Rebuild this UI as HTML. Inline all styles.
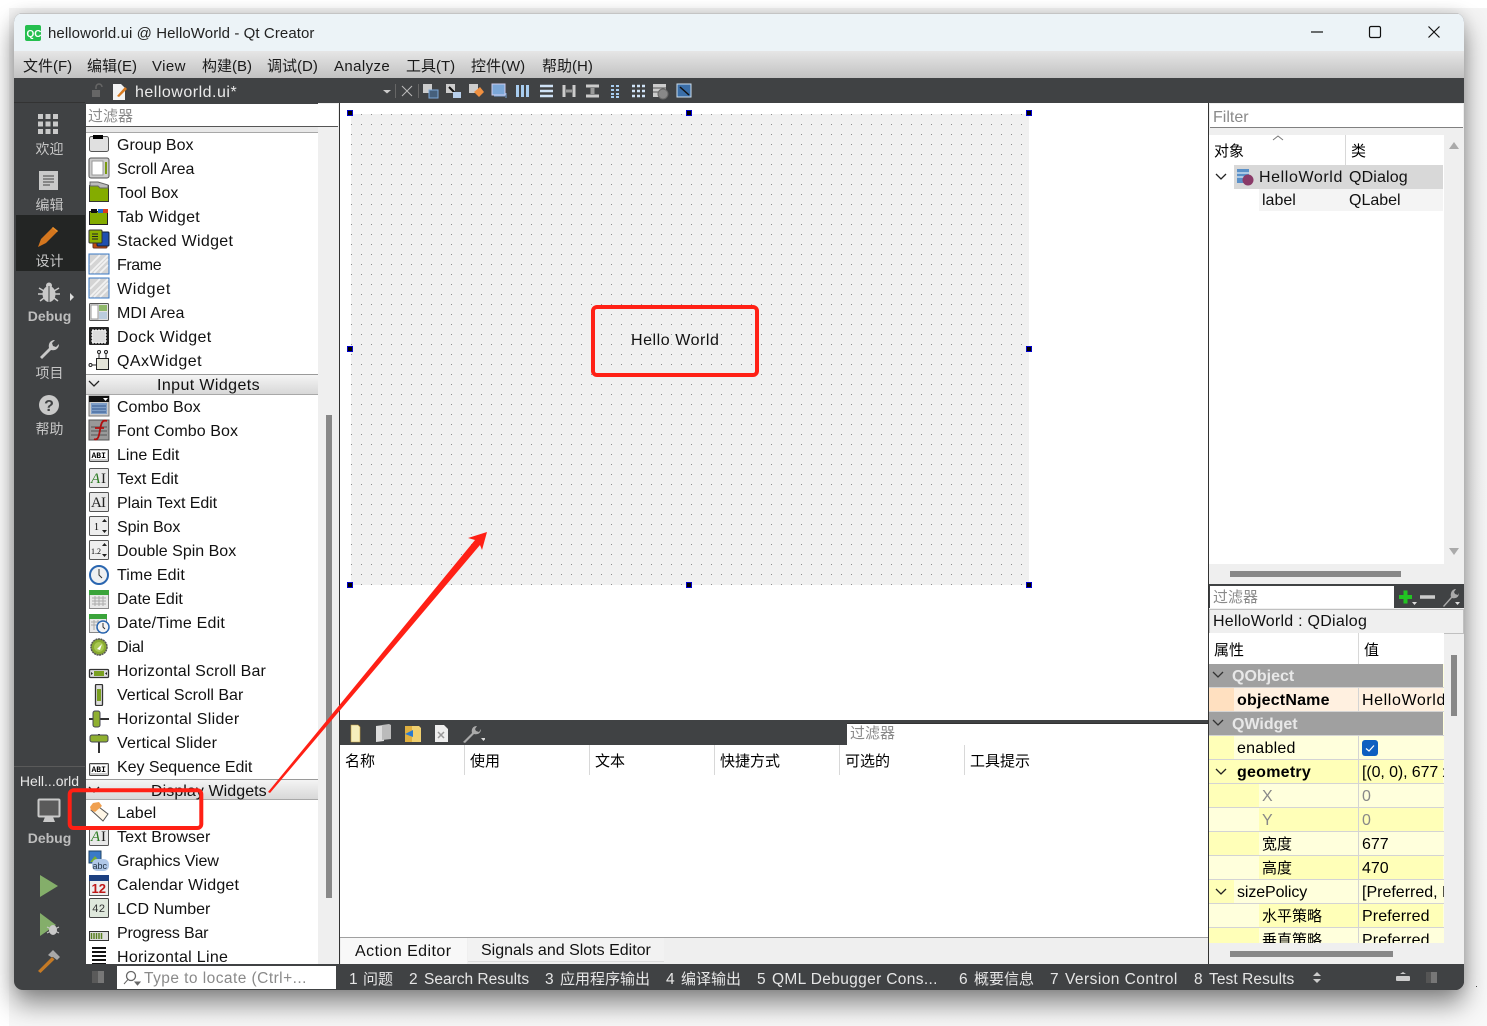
<!DOCTYPE html>
<html><head><meta charset="utf-8"><title>helloworld.ui @ HelloWorld - Qt Creator</title>
<style>
html,body{margin:0;padding:0;width:1487px;height:1026px;overflow:hidden;background:#fff}
body{position:relative;font-family:"Liberation Sans","Noto Sans CJK SC",sans-serif;font-size:16px;color:#000}
div,svg,span{position:absolute}
.t{white-space:nowrap;line-height:20px;height:20px;margin-top:2px}
.l{color:#111}
.s{color:#c6c6c6;font-size:14px;width:71px;left:14px;text-align:center;line-height:18px;height:18px;white-space:nowrap}
.sb{font-weight:bold;color:#bdbdbd}
.m{font-size:15px;color:#1a1a1a;top:57px;white-space:nowrap;line-height:20px}
.b{color:#e6e6e6;font-size:15.5px;top:970px;white-space:nowrap;line-height:20px}
.bc{font-size:15px}
.hd{left:86px;width:232px;background:linear-gradient(#f4f4f4,#d8d8d8);border-top:1px solid #9a9a9a;border-bottom:1px solid #a8a8a8;height:19px}
.i{left:88px;width:22px;height:22px}
.r{left:1209px;width:234px;height:23px}
.p{white-space:nowrap;line-height:20px;height:20px;margin-top:2px}
.sep{background:#d8d8d8;width:1px}
.h{width:4px;height:4px;background:#000;border:1px solid #00c}
</style></head><body>
<svg width="0" height="0" style="left:0;top:0"><defs>
<symbol id="g" viewBox="0 0 22 22"><rect x="1.500" y="3.500" width="19" height="15" rx="2" fill="#e0e0e0" stroke="#555"/><rect x="5" y="2" width="10" height="4" fill="#000"/></symbol>
<symbol id="sa" viewBox="0 0 22 22"><rect x="1" y="1" width="20" height="20" rx="2" fill="#ccc" stroke="#555"/><rect x="4" y="4" width="11" height="14" fill="#fff" stroke="#999"/><rect x="17" y="5" width="2" height="12" fill="#7a9a10"/></symbol>
<symbol id="tb" viewBox="0 0 22 22"><path d="M1.500 4.500h19v16h-19z" fill="#84ac00" stroke="#333"/><path d="M2 1h8l10 3v3h-8l-2-2H2z" fill="#bbb" stroke="#666"/></symbol>
<symbol id="tw" viewBox="0 0 22 22"><rect x="1.500" y="6.500" width="18" height="13" fill="#84ac00" stroke="#222"/><rect x="3" y="4" width="6" height="4" fill="#111"/><rect x="10" y="4" width="5" height="4" fill="#1f6ed4"/><rect x="15" y="4" width="5" height="4" fill="#d83b1c"/></symbol>
<symbol id="st" viewBox="0 0 22 22"><rect x="5" y="6" width="14" height="13" rx="1" fill="#c04a10" stroke="#632"/><rect x="9" y="3" width="12" height="14" rx="1" fill="#1f4fb0" stroke="#123"/><rect x="1" y="1" width="13" height="13" rx="1" fill="#8cb000" stroke="#333"/><path d="M4 5h6M4 7.500h6M4 10h6" stroke="#222"/></symbol>
<symbol id="fr" viewBox="0 0 22 22"><rect x="1" y="1" width="20" height="20" fill="#d4d4d4" stroke="#3a78c4"/><path d="M2 12 12 2M6 20 20 6M2 20 20 2M12 20 20 12" stroke="#f2f2f2" stroke-width="1.800"/></symbol>
<symbol id="mdi" viewBox="0 0 22 22"><rect x="1.500" y="2.500" width="19" height="17" rx="1" fill="#e0e0e0" stroke="#555"/><rect x="3" y="4" width="7" height="14" fill="#fff" stroke="#999"/><rect x="11" y="4" width="8" height="6" fill="#8fb86a"/><rect x="11" y="11" width="8" height="7" fill="#bcd"/></symbol>
<symbol id="dk" viewBox="0 0 22 22"><rect x="1" y="2" width="20" height="18" rx="1" fill="#222"/><rect x="4" y="5" width="14" height="13" fill="#ddd" stroke="#fff" stroke-dasharray="2 1"/></symbol>
<symbol id="qx" viewBox="0 0 22 22"><rect x="8.500" y="9.500" width="12" height="11" fill="#e4e4d8" stroke="#222"/><path d="M11 9V3M18 9V3M8 16H3" stroke="#222"/><circle cx="11" cy="3" r="1.500" fill="#fff" stroke="#222"/><circle cx="18" cy="3" r="1.500" fill="#fff" stroke="#222"/><circle cx="2.500" cy="16" r="1.500" fill="#fff" stroke="#222"/></symbol>
<symbol id="cb" viewBox="0 0 22 22"><rect x="1" y="1" width="20" height="20" fill="#ccc" stroke="#777"/><rect x="1" y="1" width="20" height="6" fill="#111"/><path d="M15 3h5l-2.500 3z" fill="#fff"/><rect x="3" y="8" width="16" height="11" fill="#7f9fc8"/><path d="M4 11h14M4 14h14M4 17h14" stroke="#345a90"/></symbol>
<symbol id="fc" viewBox="0 0 22 22"><rect x="1" y="1" width="20" height="20" fill="#999" stroke="#555"/><path d="M3 8h16M3 12h16M3 16h16" stroke="#777" stroke-width="2"/><path d="M6 20c4 2 5-3 6-9s2-11 7-9M7 9h9" fill="none" stroke="#b01010" stroke-width="1.800"/></symbol>
<symbol id="le" viewBox="0 0 22 22"><rect x="1.500" y="6.500" width="19" height="12" rx="1" fill="#ccc" stroke="#444"/><rect x="3" y="8" width="16" height="8" fill="#fff"/><text x="3.500" y="15" font-size="8" font-weight="bold" font-family="Liberation Mono">ABI</text></symbol>
<symbol id="te" viewBox="0 0 22 22"><rect x="1.500" y="1.500" width="19" height="19" rx="1" fill="#e8e8e8" stroke="#555"/><text x="3" y="16" font-size="15" font-style="italic" font-family="Liberation Serif" fill="#2a7a20">A</text><text x="13" y="16" font-size="15" font-family="Liberation Serif" fill="#222">I</text></symbol>
<symbol id="pe" viewBox="0 0 22 22"><rect x="1.500" y="1.500" width="19" height="19" rx="1" fill="#e8e8e8" stroke="#555"/><text x="3" y="16" font-size="15" font-family="Liberation Serif" fill="#222">A</text><text x="13" y="16" font-size="15" font-family="Liberation Serif" fill="#222">I</text></symbol>
<symbol id="sp" viewBox="0 0 22 22"><rect x="1.500" y="1.500" width="19" height="19" rx="1" fill="#eee" stroke="#555"/><text x="6" y="15" font-size="10" font-family="Liberation Serif">1</text><path d="M14 7l2.500-3L19 7zM14 15l2.500 3 2.500-3z" fill="#222"/></symbol>
<symbol id="ds" viewBox="0 0 22 22"><rect x="1.500" y="1.500" width="19" height="19" rx="1" fill="#eee" stroke="#555"/><text x="3" y="15" font-size="8" font-family="Liberation Serif">1.2</text><path d="M14 7l2.500-3L19 7zM14 15l2.500 3 2.500-3z" fill="#222"/></symbol>
<symbol id="ck" viewBox="0 0 22 22"><circle cx="11" cy="11" r="9" fill="#eef0f2" stroke="#2a66b0" stroke-width="2"/><path d="M11 5v6l3 3" fill="none" stroke="#333"/></symbol>
<symbol id="de" viewBox="0 0 22 22"><rect x="1.500" y="3.500" width="19" height="17" fill="#e8e8e8" stroke="#888"/><rect x="1" y="2" width="20" height="5" fill="#3aa43a"/><path d="M4 10h14M4 13h14M4 16h14M7 8v10M11 8v10M15 8v10" stroke="#aaa"/></symbol>
<symbol id="dt" viewBox="0 0 22 22"><rect x="1.500" y="3.500" width="17" height="17" fill="#e8e8e8" stroke="#888"/><rect x="1" y="2" width="18" height="5" fill="#3aa43a"/><path d="M3 10h10M3 13h8M6 8v10M10 8v6" stroke="#aaa"/><circle cx="15" cy="15" r="6" fill="#f4f4f4" stroke="#2a66b0" stroke-width="1.500"/><path d="M15 11v4l2 2" fill="none" stroke="#333"/></symbol>
<symbol id="dl" viewBox="0 0 22 22"><circle cx="11" cy="11" r="8" fill="#88aa30" stroke="#555" stroke-width="1.500" stroke-dasharray="2 .6"/><circle cx="11" cy="11" r="5" fill="#a8c850"/><path d="M9 13l5-5-2 6z" fill="#fff"/></symbol>
<symbol id="hs" viewBox="0 0 22 22"><rect x="1.500" y="7.500" width="19" height="8" rx="1" fill="#ddd" stroke="#333" stroke-width="1.300"/><rect x="6" y="9" width="10" height="5" fill="#7aa020"/><path d="M5 11.500l-2-1.500v3zM17 11.500l2-1.500v3z" fill="#222"/></symbol>
<symbol id="vs" viewBox="0 0 22 22"><rect x="7.500" y="0.500" width="7" height="21" rx="1" fill="#ddd" stroke="#333" stroke-width="1.300"/><rect x="9" y="5" width="4" height="12" fill="#7aa020"/></symbol>
<symbol id="hl" viewBox="0 0 22 22"><path d="M1 11h20" stroke="#333" stroke-width="2"/><rect x="5" y="3" width="7" height="16" rx="2" fill="#8fb030" stroke="#445"/></symbol>
<symbol id="vl" viewBox="0 0 22 22"><path d="M11 2v19" stroke="#333" stroke-width="2"/><rect x="2" y="3" width="18" height="7" rx="2" fill="#8fb030" stroke="#445"/></symbol>
<symbol id="lb" viewBox="0 0 22 22"><path d="M7 3 20 13l-5 7L3 9z" fill="#fff6e6" stroke="#555"/><path d="M2 6l3-4 6-1 3 4-7 6-4-2z" fill="#f0a050"/></symbol>
<symbol id="gv" viewBox="0 0 22 22"><rect x="1" y="1" width="12" height="12" fill="#3a7ac8" stroke="#246"/><path d="M2 12l5-6 5 6z" fill="#7ab030"/><rect x="4" y="9" width="17" height="12" rx="5" fill="#b0c8e8"/><text x="4.500" y="19" font-size="9" fill="#234">abc</text></symbol>
<symbol id="cl" viewBox="0 0 22 22"><rect x="1.500" y="1.500" width="19" height="20" fill="#eee" stroke="#555"/><rect x="1" y="1" width="20" height="6" fill="#1c3f80"/><text x="3.500" y="19" font-size="13" font-weight="bold" fill="#c01818">12</text></symbol>
<symbol id="lc" viewBox="0 0 22 22"><rect x="1.500" y="1.500" width="19" height="19" rx="1" fill="#dfe8dc" stroke="#444"/><text x="4" y="15" font-size="11" font-family="Liberation Mono" fill="#333">42</text></symbol>
<symbol id="pb" viewBox="0 0 22 22"><rect x="1.500" y="7.500" width="19" height="9" fill="#ddd" stroke="#333"/><path d="M3.500 9v6M6 9v6M8.500 9v6M11 9v6M13.500 9v6" stroke="#5a8020" stroke-width="1.500"/></symbol>
<symbol id="hn" viewBox="0 0 22 22"><path d="M4 2h14M4 6h14M4 10h14M4 14h14M4 18h14" stroke="#111" stroke-width="2"/></symbol>
</defs></svg>

<div style="left:9px;top:8px;width:1478px;height:1018px;background:linear-gradient(#f4f4f4,#f8f8f8)"></div>
<div id="win" style="left:14px;top:13px;width:1450px;height:977px;border-radius:9px;background:#404244;box-shadow:0 14px 26px rgba(0,0,0,.45),0 0 14px rgba(0,0,0,.12);overflow:hidden">
<div style="left:0;top:0;width:1450px;height:38px;background:#ecf3f7;border-top:1px solid #c4c4c4;box-sizing:border-box"></div>
<div style="left:0;top:38px;width:1450px;height:27px;background:linear-gradient(#e6e6e6,#c2c2c2)"></div>
</div>

<!-- title -->
<svg style="left:25px;top:25px" width="16" height="16"><rect width="16" height="16" rx="2" fill="#25bf4f"/><text x="1.500" y="12" font-size="10" font-weight="bold" fill="#fff" font-family="Liberation Sans">QC</text></svg>
<div class="t" style="left:48px;top:22px;font-size:15px;color:#222;letter-spacing:.08px">helloworld.ui @ HelloWorld - Qt Creator</div>
<svg style="left:1305px;top:22px" width="145" height="20" fill="none" stroke="#111" stroke-width="1.200"><path d="M6 10h12"/><rect x="64.500" y="4.500" width="11" height="11" rx="1.500"/><path d="M123.500 4.500l11 11M134.500 4.500l-11 11"/></svg>
<div class="m" style="left:23px">文件(F)</div><div class="m" style="left:87px">编辑(E)</div><div class="m" style="left:152px;letter-spacing:.4px">View</div><div class="m" style="left:202px">构建(B)</div><div class="m" style="left:267px">调试(D)</div><div class="m" style="left:334px;letter-spacing:.4px">Analyze</div><div class="m" style="left:406px">工具(T)</div><div class="m" style="left:471px">控件(W)</div><div class="m" style="left:542px">帮助(H)</div>

<!-- editor toolbar -->
<div style="left:14px;top:102px;width:71px;height:1px;background:#333"></div>
<svg style="left:90px;top:83px" width="40" height="18"><path d="M6 6V4a3 3 0 0 1 6 0" fill="none" stroke="#666" stroke-width="1.500"/><rect x="2" y="7" width="8" height="7" fill="#666"/><path d="M23 1h8l4 4v12H23z" fill="#f3f3f3"/><path d="M27 13l8-9 2 2-8 8z" fill="#d87a20"/></svg>
<div class="t" style="left:135px;top:81px;color:#eaeaea;font-size:16px;letter-spacing:.5px">helloworld.ui*</div>
<svg style="left:380px;top:82px" width="320" height="18">
<path d="M3 8h8l-4 3.500z" fill="#ccc"/><path d="M15.500 2v14M38.500 2v14" stroke="#666"/><path d="M22 4l10 10M32 4 22 14" stroke="#bbb"/>
<g><rect x="43" y="2" width="9" height="9" fill="#ccc"/><rect x="49" y="8" width="9" height="8" fill="#46607c" stroke="#7ba7d8"/></g>
<g><rect x="66" y="2" width="9" height="9" fill="#ccc"/><path d="M69 5l6 6" stroke="#111" stroke-width="2"/><rect x="73" y="10" width="8" height="6" fill="#b8d0ec"/></g>
<g><rect x="89" y="2" width="9" height="9" fill="#ccc"/><path d="M100 5l4 5-5 5-5-5z" fill="#f09040"/></g>
<g><rect x="112" y="2" width="13" height="11" fill="#7ba7d8" stroke="#cce"/><path d="M114 14h11M126 11v5" stroke="#7ba7d8"/></g>
<path d="M137.500 3v12M142.500 3v12M147.500 3v12" stroke="#a8cdf0" stroke-width="3"/>
<path d="M160 4h13M160 9h13M160 14h13" stroke="#cfe2f6" stroke-width="2.500"/>
<path d="M184 3v12M194 3v12" stroke="#ccc" stroke-width="3"/><path d="M186 9h6" stroke="#999" stroke-width="3"/>
<path d="M206 4h13M206 14h13" stroke="#ccc" stroke-width="3"/><path d="M212.500 6v6" stroke="#999" stroke-width="4"/>
<path d="M231 4h3M236 4h3M231 8h3M236 8h3M231 12h3M236 12h3M231 15h3M236 15h3" stroke="#a8cdf0" stroke-width="2"/>
<path d="M252 4h3M257 4h3M262 4h3M252 9h3M257 9h3M262 9h3M252 14h3M257 14h3M262 14h3" stroke="#cfe2f6" stroke-width="2.500"/>
<rect x="273" y="2" width="13" height="13" fill="#ccc"/><path d="M273 6h13M273 10h13" stroke="#555"/><circle cx="283" cy="12" r="5" fill="#888" stroke="#666"/>
<rect x="297" y="2" width="14" height="13" fill="#3a6ea8" stroke="#cde"/><path d="M300 5l9 8" stroke="#111" stroke-width="1.500"/>
</svg>

<!-- status bar (under sidebar) -->
<div style="left:85px;top:964px;width:1379px;height:26px;background:#404244;border-radius:0 0 9px 0"></div>

<!-- sidebar -->
<div style="left:16px;top:215px;width:69px;height:56px;background:#232524"></div>
<svg style="left:38px;top:114px" width="21" height="20" fill="#c9c9c9"><rect width="5" height="5"/><rect x="7.500" width="5" height="5"/><rect x="15" width="5" height="5"/><rect y="7.500" width="5" height="5"/><rect x="7.500" y="7.500" width="5" height="5"/><rect x="15" y="7.500" width="5" height="5"/><rect y="15" width="5" height="5"/><rect x="7.500" y="15" width="5" height="5"/><rect x="15" y="15" width="5" height="5"/></svg>
<div class="s" style="top:140px">欢迎</div>
<svg style="left:39px;top:171px" width="20" height="20"><rect width="19" height="19" fill="#c9c9c9"/><path d="M4 5h11M4 8h11M4 11h11M4 14h7" stroke="#444"/></svg>
<div class="s" style="top:196px">编辑</div>
<svg style="left:37px;top:226px" width="22" height="22"><path d="M1 21l3-8L16 1l5 4L9 17z" fill="#d4761e"/><path d="M15 2l5 4 1-1-5-4z" fill="#e8902c"/></svg>
<div class="s" style="top:252px">设计</div>
<svg style="left:38px;top:282px" width="22" height="22" fill="#c9c9c9"><ellipse cx="11" cy="12" rx="6.500" ry="8"/><circle cx="11" cy="3.500" r="3"/><path d="M1 6l5 3M21 6l-5 3M0 12h5M22 12h-5M2 19l4-3M20 19l-4-3" stroke="#c9c9c9" stroke-width="1.500"/><path d="M11 4v16" stroke="#404244"/></svg>
<svg style="left:69px;top:293px" width="6" height="8"><path d="M1 0l4 4-4 4z" fill="#ddd"/></svg>
<div class="s sb" style="top:307px">Debug</div>
<svg style="left:38px;top:338px" width="22" height="22"><path d="M2 19 11 10c-1-4 1-8 6-8l-3 3 1 3 3 1 3-3c0 5-4 7-8 6l-9 9z" fill="#c9c9c9"/></svg>
<div class="s" style="top:364px">项目</div>
<svg style="left:38px;top:394px" width="22" height="22"><circle cx="11" cy="11" r="10" fill="#c9c9c9"/><text x="11" y="17" text-anchor="middle" font-size="16" font-weight="bold" fill="#404244" font-family="Liberation Sans">?</text></svg>
<div class="s" style="top:420px">帮助</div>
<div style="left:14px;top:766px;width:71px;height:1px;background:#5a5a5a"></div>
<div class="s" style="top:772px;color:#e8e8e8">Hell...orld</div>
<svg style="left:37px;top:798px" width="26" height="26"><rect x="1.500" y="1.500" width="21" height="17" rx="1" fill="#5a5a5a" stroke="#c9c9c9" stroke-width="2"/><path d="M8 19h8l2 5H6z" fill="#c9c9c9"/></svg>
<div class="s sb" style="top:829px">Debug</div>
<svg style="left:40px;top:875px" width="19" height="23"><path d="M0 0l18 11L0 22z" fill="#84ae6a"/></svg>
<svg style="left:40px;top:913px" width="20" height="24"><path d="M0 0l16 12L0 23z" fill="#84ae6a"/><ellipse cx="13" cy="17" rx="4" ry="5" fill="#c9c9c9"/><path d="M7 14l12 6M19 14 7 20" stroke="#c9c9c9"/></svg>
<svg style="left:37px;top:949px" width="24" height="24"><path d="M1 22 15 8l2.500 2.500L3.500 24z" fill="#c57a25"/><path d="M11 6l5-5 7 7-3 3-4-3-2 0z" fill="#a8a8a8"/></svg>

<!-- widget box -->
<div style="left:86px;top:127px;width:232px;height:837px;background:#fff"></div>
<div style="left:318px;top:103px;width:21px;height:861px;background:#efefef"></div>
<div style="left:86px;top:127px;width:232px;height:5px;overflow:hidden;background:#e8e8e8"><div style="left:85px;top:-14px;white-space:nowrap;line-height:20px;color:#111">Containers</div></div>
<div style="left:86px;top:104px;width:252px;height:22px;background:#fff;border-bottom:1px solid #555"></div>
<div class="t" style="left:88px;top:105px;font-size:15px;color:#8a8a8a">过滤器</div>
<div style="left:86px;top:132px;width:232px;height:1px;background:#a8a8a8"></div>
<div style="left:326px;top:415px;width:6px;height:483px;background:#888"></div>
<div style="left:339px;top:103px;width:1px;height:861px;background:#333"></div>

<svg class="i" style="top:133px"><use href="#g"/></svg><div class="t l" style="left:117px;top:134px">Group Box</div>
<svg class="i" style="top:157px"><use href="#sa"/></svg><div class="t l" style="left:117px;top:158px">Scroll Area</div>
<svg class="i" style="top:181px"><use href="#tb"/></svg><div class="t l" style="left:117px;top:182px">Tool Box</div>
<svg class="i" style="top:205px"><use href="#tw"/></svg><div class="t l" style="left:117px;top:206px;letter-spacing:.3px">Tab Widget</div>
<svg class="i" style="top:229px"><use href="#st"/></svg><div class="t l" style="left:117px;top:230px;letter-spacing:.3px">Stacked Widget</div>
<svg class="i" style="top:253px"><use href="#fr"/></svg><div class="t l" style="left:117px;top:254px;letter-spacing:-.4px">Frame</div>
<svg class="i" style="top:277px"><use href="#fr"/></svg><div class="t l" style="left:117px;top:278px;letter-spacing:.7px">Widget</div>
<svg class="i" style="top:301px"><use href="#mdi"/></svg><div class="t l" style="left:117px;top:302px;letter-spacing:.1px">MDI Area</div>
<svg class="i" style="top:325px"><use href="#dk"/></svg><div class="t l" style="left:117px;top:326px;letter-spacing:.35px">Dock Widget</div>
<svg class="i" style="top:349px"><use href="#qx"/></svg><div class="t l" style="left:117px;top:350px;letter-spacing:.45px">QAxWidget</div>
<div class="hd" style="top:374px"></div>
<svg style="left:88px;top:380px" width="12" height="8"><path d="M1 1l5 5 5-5" fill="none" stroke="#222" stroke-width="1.300"/></svg>
<div class="t l" style="left:157px;top:374px;letter-spacing:.4px">Input Widgets</div>
<svg class="i" style="top:395px"><use href="#cb"/></svg><div class="t l" style="left:117px;top:396px">Combo Box</div>
<svg class="i" style="top:419px"><use href="#fc"/></svg><div class="t l" style="left:117px;top:420px;letter-spacing:.07px">Font Combo Box</div>
<svg class="i" style="top:443px"><use href="#le"/></svg><div class="t l" style="left:117px;top:444px">Line Edit</div>
<svg class="i" style="top:467px"><use href="#te"/></svg><div class="t l" style="left:117px;top:468px">Text Edit</div>
<svg class="i" style="top:491px"><use href="#pe"/></svg><div class="t l" style="left:117px;top:492px;letter-spacing:-.07px">Plain Text Edit</div>
<svg class="i" style="top:515px"><use href="#sp"/></svg><div class="t l" style="left:117px;top:516px;letter-spacing:-.1px">Spin Box</div>
<svg class="i" style="top:539px"><use href="#ds"/></svg><div class="t l" style="left:117px;top:540px">Double Spin Box</div>
<svg class="i" style="top:564px"><use href="#ck"/></svg><div class="t l" style="left:117px;top:564px;letter-spacing:.1px">Time Edit</div>
<svg class="i" style="top:588px"><use href="#de"/></svg><div class="t l" style="left:117px;top:588px">Date Edit</div>
<svg class="i" style="top:612px"><use href="#dt"/></svg><div class="t l" style="left:117px;top:612px;letter-spacing:.2px">Date/Time Edit</div>
<svg class="i" style="top:636px"><use href="#dl"/></svg><div class="t l" style="left:117px;top:636px;letter-spacing:-.2px">Dial</div>
<svg class="i" style="top:662px"><use href="#hs"/></svg><div class="t l" style="left:117px;top:660px;letter-spacing:.15px">Horizontal Scroll Bar</div>
<svg class="i" style="top:684px"><use href="#vs"/></svg><div class="t l" style="left:117px;top:684px">Vertical Scroll Bar</div>
<svg class="i" style="top:708px"><use href="#hl"/></svg><div class="t l" style="left:117px;top:708px;letter-spacing:.3px">Horizontal Slider</div>
<svg class="i" style="top:732px"><use href="#vl"/></svg><div class="t l" style="left:117px;top:732px;letter-spacing:.15px">Vertical Slider</div>
<svg class="i" style="top:757px"><use href="#le"/></svg><div class="t l" style="left:117px;top:756px;letter-spacing:-.05px">Key Sequence Edit</div>
<div class="hd" style="top:779px"></div>
<svg style="left:88px;top:786px" width="12" height="8"><path d="M1 1l5 5 5-5" fill="none" stroke="#222" stroke-width="1.300"/></svg>
<div class="t l" style="left:151px;top:780px;letter-spacing:.07px">Display Widgets</div>
<svg class="i" style="top:801px"><use href="#lb"/></svg><div class="t l" style="left:117px;top:802px">Label</div>
<svg class="i" style="top:825px"><use href="#te"/></svg><div class="t l" style="left:117px;top:826px;letter-spacing:.08px">Text Browser</div>
<svg class="i" style="top:850px"><use href="#gv"/></svg><div class="t l" style="left:117px;top:850px;letter-spacing:-.08px">Graphics View</div>
<svg class="i" style="top:874px"><use href="#cl"/></svg><div class="t l" style="left:117px;top:874px;letter-spacing:.2px">Calendar Widget</div>
<svg class="i" style="top:897px"><use href="#lc"/></svg><div class="t l" style="left:117px;top:898px">LCD Number</div>
<svg class="i" style="top:924px"><use href="#pb"/></svg><div class="t l" style="left:117px;top:922px;letter-spacing:-.17px">Progress Bar</div>
<div style="left:86px;top:944px;width:252px;height:20px;overflow:hidden"><svg style="left:2px;top:2px" width="22" height="22"><use href="#hn"/></svg><div class="t l" style="left:31px;top:2px;letter-spacing:.3px">Horizontal Line</div></div>

<!-- form editor -->
<div style="left:340px;top:103px;width:868px;height:617px;background:#fff"></div>
<svg style="left:351px;top:104px" width="678" height="481"><defs><pattern id="dots" x="0" y="0" width="10" height="10" patternUnits="userSpaceOnUse"><rect x="0" y="0" width="1" height="1" fill="#8d8d8d"/></pattern></defs><rect y="10" width="678" height="471" fill="#f0f0f0"/><rect y="10" width="678" height="471" fill="url(#dots)"/></svg>
<div class="t" style="left:631px;top:329px;color:#111;letter-spacing:.55px">Hello World</div>
<div class="h" style="left:347px;top:110px"></div>
<div class="h" style="left:686px;top:110px"></div>
<div class="h" style="left:1026px;top:110px"></div>
<div class="h" style="left:347px;top:346px"></div>
<div class="h" style="left:1026px;top:346px"></div>
<div class="h" style="left:347px;top:582px"></div>
<div class="h" style="left:686px;top:582px"></div>
<div class="h" style="left:1026px;top:582px"></div>

<!-- action editor -->
<div style="left:340px;top:745px;width:868px;height:192px;background:#fff"></div>
<div style="left:340px;top:720px;width:868px;height:25px;background:#404244"></div>
<svg style="left:345px;top:722px" width="140" height="22"><path d="M6 3h7l2 2v15H6z" fill="#f6eebc" stroke="#c8a040" stroke-width=".6"/><path d="M31 4l8-1v16l-8 1z" fill="#ddd"/><path d="M37 3l7-1 2 1v14l-9 1z" fill="#bbb"/><path d="M60 4h7v16h-7z" fill="#e0b040"/><path d="M67 4h7l2 2v14h-9z" fill="#f0d070"/><path d="M60 12l8-4v7z" fill="#2a7ad0"/><path d="M90 3h9l4 4v13H90z" fill="#eee"/><path d="M93 10l6 6M99 10l-6 6" stroke="#999" stroke-width="1.500"/><path d="M118 20l9-9c-1-4 1-7 5-7l-2 3 1 2 3 1 2-3c0 4-3 6-7 5l-9 9z" fill="#aaa"/><path d="M136 16h5l-2.500 3z" fill="#ddd"/></svg>
<div style="left:847px;top:723px;width:361px;height:22px;background:#fff;border-top:1px solid #333;box-sizing:border-box"></div>
<div class="t" style="left:850px;top:722px;font-size:15px;color:#8a8a8a">过滤器</div>
<div class="sep" style="left:464px;top:745px;height:30px"></div><div class="sep" style="left:589px;top:745px;height:30px"></div><div class="sep" style="left:714px;top:745px;height:30px"></div><div class="sep" style="left:839px;top:745px;height:30px"></div><div class="sep" style="left:964px;top:745px;height:30px"></div>
<div class="t" style="left:345px;top:750px;font-size:15px">名称</div><div class="t" style="left:470px;top:750px;font-size:15px">使用</div><div class="t" style="left:595px;top:750px;font-size:15px">文本</div><div class="t" style="left:720px;top:750px;font-size:15px">快捷方式</div><div class="t" style="left:845px;top:750px;font-size:15px">可选的</div><div class="t" style="left:970px;top:750px;font-size:15px">工具提示</div>
<div style="left:340px;top:937px;width:868px;height:27px;background:#efefef;border-top:1px solid #a0a0a0;box-sizing:border-box"></div>
<div style="left:341px;top:938px;width:126px;height:26px;background:#f8f8f8"></div>
<div style="left:468px;top:938px;width:196px;height:24px;background:#f2f2f2;border-bottom:1px solid #ddd;box-sizing:border-box"></div>
<div class="t" style="left:355px;top:940px;color:#111;letter-spacing:.45px">Action Editor</div>
<div class="t" style="left:481px;top:939px;color:#111">Signals and Slots Editor</div>

<!-- right panel -->
<div style="left:1208px;top:103px;width:1px;height:861px;background:#333"></div>
<div style="left:1209px;top:103px;width:255px;height:861px;background:#efefef"></div>
<div style="left:1210px;top:104px;width:253px;height:23px;background:#fff;border-bottom:1px solid #808080"></div>
<div class="t" style="left:1213px;top:106px;font-size:16px;color:#8a8a8a">Filter</div>
<div style="left:1209px;top:135px;width:235px;height:429px;background:#fff"></div>
<div class="sep" style="left:1345px;top:135px;height:30px"></div>
<svg style="left:1272px;top:134px" width="12" height="8"><path d="M1 6l5-4 5 4" fill="none" stroke="#777"/></svg>
<div class="t" style="left:1214px;top:140px;font-size:15px">对象</div><div class="t" style="left:1351px;top:140px;font-size:15px">类</div>
<div style="left:1234px;top:165px;width:209px;height:24px;background:#d8d8d8"></div>
<div style="left:1259px;top:189px;width:184px;height:22px;background:#f4f4f4"></div>
<svg style="left:1215px;top:173px" width="12" height="8"><path d="M1 1l5 5 5-5" fill="none" stroke="#222" stroke-width="1.300"/></svg>
<svg style="left:1236px;top:168px" width="18" height="18"><rect x="1" y="1" width="12" height="14" fill="#5a90c8"/><path d="M1 5h12M1 9h12" stroke="#fff"/><circle cx="12" cy="12" r="5.500" fill="#8a3a68"/></svg>
<div class="t l" style="left:1259px;top:166px;letter-spacing:.6px">HelloWorld</div><div class="t l" style="left:1349px;top:166px;letter-spacing:.15px">QDialog</div>
<div class="t l" style="left:1262px;top:189px">label</div><div class="t l" style="left:1349px;top:189px">QLabel</div>
<svg style="left:1449px;top:141px" width="10" height="8"><path d="M0 8l5-7 5 7z" fill="#aaa"/></svg>
<svg style="left:1449px;top:548px" width="10" height="8"><path d="M0 0l5 7 5-7z" fill="#aaa"/></svg>
<div style="left:1230px;top:571px;width:171px;height:6px;background:#888"></div>

<div style="left:1209px;top:584px;width:255px;height:24px;background:#404244"></div>
<div style="left:1210px;top:586px;width:184px;height:22px;background:#fff"></div>
<div class="t" style="left:1213px;top:586px;font-size:15px;color:#8a8a8a">过滤器</div>
<svg style="left:1396px;top:587px" width="66" height="20"><path d="M3 10h13M9.500 3.500v13" stroke="#22c522" stroke-width="4"/><path d="M16 15h5l-2.500 3zM59 15h5l-2.500 3z" fill="#ddd"/><path d="M24 10h15" stroke="#ccc" stroke-width="3.500"/><path d="M47 19l8-9c-1-4 1-8 5-8l-2 3 1 2 3 1 1-2c0 4-3 6-7 5l-8 9z" fill="#aaa"/></svg>
<div style="left:1209px;top:609px;width:253px;height:23px;background:#efefef;border:1px solid #c0c0c0"></div>
<div class="t l" style="left:1213px;top:610px;letter-spacing:.25px">HelloWorld : QDialog</div>
<div style="left:1209px;top:633px;width:235px;height:31px;background:#fff"></div>
<div class="sep" style="left:1358px;top:633px;height:31px"></div>
<div class="t" style="left:1214px;top:639px;font-size:15px">属性</div><div class="t" style="left:1364px;top:639px;font-size:15px">值</div>
<div style="left:1451px;top:655px;width:6px;height:61px;background:#888"></div>

<div style="left:1209px;top:664px;width:235px;height:279px;background:#ffffdc;overflow:hidden">
<div class="r" style="left:0;top:0;background:#a0a0a0"></div>
<div class="r" style="left:0;top:24px;background:#fff0e0"></div><div style="left:0;top:24px;width:25px;height:23px;background:#ffe0c0"></div>
<div class="r" style="left:0;top:48px;background:#a0a0a0"></div>
<div class="r" style="left:0;top:72px;background:#ffffdc"></div><div style="left:0;top:72px;width:25px;height:23px;background:#ffffb8"></div>
<div class="r" style="left:0;top:96px;background:#ffffb8"></div>
<div class="r" style="left:0;top:120px;background:#ffffdc"></div><div style="left:0;top:120px;width:50px;height:23px;background:#ffffb8"></div>
<div class="r" style="left:0;top:144px;background:#ffffb8"></div><div style="left:0;top:144px;width:50px;height:23px;background:#ffffdc"></div>
<div class="r" style="left:0;top:168px;background:#ffffdc"></div><div style="left:0;top:168px;width:50px;height:23px;background:#ffffb8"></div>
<div class="r" style="left:0;top:192px;background:#ffffb8"></div><div style="left:0;top:192px;width:50px;height:23px;background:#ffffdc"></div>
<div class="r" style="left:0;top:216px;background:#ffffdc"></div><div style="left:0;top:216px;width:25px;height:23px;background:#ffffb8"></div>
<div class="r" style="left:0;top:240px;background:#ffffb8"></div><div style="left:0;top:240px;width:50px;height:23px;background:#ffffdc"></div>
<div class="r" style="left:0;top:264px;background:#ffffdc"></div><div style="left:0;top:264px;width:50px;height:23px;background:#ffffb8"></div>
<div style="left:0;top:23px;width:235px;height:1px;background:#d4d4d4"></div><div style="left:0;top:47px;width:235px;height:1px;background:#d4d4d4"></div><div style="left:0;top:71px;width:235px;height:1px;background:#d4d4d4"></div><div style="left:0;top:95px;width:235px;height:1px;background:#d4d4d4"></div><div style="left:0;top:119px;width:235px;height:1px;background:#d4d4d4"></div><div style="left:0;top:143px;width:235px;height:1px;background:#d4d4d4"></div><div style="left:0;top:167px;width:235px;height:1px;background:#d4d4d4"></div><div style="left:0;top:191px;width:235px;height:1px;background:#d4d4d4"></div><div style="left:0;top:215px;width:235px;height:1px;background:#d4d4d4"></div><div style="left:0;top:239px;width:235px;height:1px;background:#d4d4d4"></div><div style="left:0;top:263px;width:235px;height:1px;background:#d4d4d4"></div>
<div style="left:149px;top:24px;width:1px;height:23px;background:#d4d4d4"></div>
<div style="left:149px;top:72px;width:1px;height:207px;background:#d4d4d4"></div>
<div class="p" style="left:23px;top:1px;color:#e8e8e8;font-weight:bold">QObject</div>
<div class="p" style="left:28px;top:25px;font-weight:bold;letter-spacing:.2px">objectName</div><div style="left:153px;top:25px;width:82px;height:23px;overflow:hidden"><div class="p" style="left:0;top:0;letter-spacing:.6px">HelloWorld</div></div>
<div class="p" style="left:23px;top:49px;color:#e8e8e8;font-weight:bold">QWidget</div>
<div class="p" style="left:28px;top:73px;letter-spacing:.25px">enabled</div>
<div style="left:153px;top:76px;width:16px;height:16px;border-radius:3px;background:#0d5fc0"></div><svg style="left:153px;top:76px" width="16" height="16"><path d="M4 8.500l3 2.500 5-5.500" fill="none" stroke="#fff" stroke-width="1.200"/></svg>
<div class="p" style="left:28px;top:97px;font-weight:bold;letter-spacing:.25px">geometry</div><div style="left:153px;top:97px;width:82px;height:23px;overflow:hidden"><div class="p" style="left:0;top:0;letter-spacing:-.1px">[(0, 0), 677 x 470]</div></div>
<div class="p" style="left:53px;top:121px;color:#888">X</div><div class="p" style="left:153px;top:121px;color:#888">0</div>
<div class="p" style="left:53px;top:145px;color:#888">Y</div><div class="p" style="left:153px;top:145px;color:#888">0</div>
<div class="p" style="left:53px;top:169px;font-size:15px">宽度</div><div class="p" style="left:153px;top:169px">677</div>
<div class="p" style="left:53px;top:193px;font-size:15px">高度</div><div class="p" style="left:153px;top:193px">470</div>
<div class="p" style="left:28px;top:217px;letter-spacing:-.1px">sizePolicy</div><div style="left:153px;top:217px;width:82px;height:23px;overflow:hidden"><div class="p" style="left:0;top:0">[Preferred, Preferred]</div></div>
<div class="p" style="left:53px;top:241px;font-size:15px">水平策略</div><div class="p" style="left:153px;top:241px;letter-spacing:.1px">Preferred</div>
<div class="p" style="left:53px;top:265px;font-size:15px">垂直策略</div><div class="p" style="left:153px;top:265px;letter-spacing:.1px">Preferred</div>
<svg style="left:3px;top:7px" width="12" height="8"><path d="M1 1l5 5 5-5" fill="none" stroke="#333" stroke-width="1.300"/></svg>
<svg style="left:3px;top:55px" width="12" height="8"><path d="M1 1l5 5 5-5" fill="none" stroke="#333" stroke-width="1.300"/></svg>
<svg style="left:6px;top:104px" width="12" height="8"><path d="M1 1l5 5 5-5" fill="none" stroke="#222" stroke-width="1.300"/></svg>
<svg style="left:6px;top:224px" width="12" height="8"><path d="M1 1l5 5 5-5" fill="none" stroke="#222" stroke-width="1.300"/></svg>
</div>
<div style="left:1230px;top:951px;width:163px;height:6px;background:#888"></div>

<!-- status bar contents -->
<div style="left:1209px;top:964px;width:255px;height:26px;background:#404244;border-radius:0 0 9px 0"></div>
<svg style="left:92px;top:971px" width="12" height="12"><rect width="12" height="12" fill="#5a5a5a"/><rect x="6" width="6" height="12" fill="#777"/></svg>
<div style="left:117px;top:966px;width:219px;height:23px;background:#fff"></div>
<svg style="left:123px;top:970px" width="18" height="16"><circle cx="8" cy="6" r="4.500" fill="none" stroke="#666" stroke-width="1.300"/><path d="M5 9.500 1 14M12 12h5l-2.500 3z" stroke="#666" fill="#666"/></svg>
<div class="t" style="left:144px;top:967px;font-size:15.500px;color:#8a8a8a;letter-spacing:.45px">Type to locate (Ctrl+...</div>
<div class="b" style="left:349px">1</div><div class="b bc" style="left:363px">问题</div>
<div class="b" style="left:409px">2</div><div class="b" style="left:424px">Search Results</div>
<div class="b" style="left:545px">3</div><div class="b bc" style="left:560px">应用程序输出</div>
<div class="b" style="left:666px">4</div><div class="b bc" style="left:681px">编译输出</div>
<div class="b" style="left:757px">5</div><div class="b" style="left:772px;letter-spacing:.35px">QML Debugger Cons...</div>
<div class="b" style="left:959px">6</div><div class="b bc" style="left:974px">概要信息</div>
<div class="b" style="left:1050px">7</div><div class="b" style="left:1065px;letter-spacing:.45px">Version Control</div>
<div class="b" style="left:1194px">8</div><div class="b" style="left:1209px;letter-spacing:.08px">Test Results</div>
<svg style="left:1312px;top:971px" width="10" height="13"><path d="M1 5l4-4 4 4zM1 8l4 4 4-4z" fill="#ccc"/></svg>
<svg style="left:1394px;top:969px" width="50" height="16"><rect x="2" y="7" width="14" height="5" rx="1" fill="#ccc"/><path d="M9 3l3 2H6z" fill="#ccc"/><rect x="32" y="3" width="11" height="11" fill="#777"/><rect x="32" y="3" width="5" height="11" fill="#555"/></svg>

<!-- annotations -->
<svg style="left:0;top:0;z-index:5" width="1487" height="1026">
<rect x="593" y="307" width="164" height="68" rx="4" fill="none" stroke="#ff2015" stroke-width="4"/>
<rect x="69.700" y="790.300" width="131.600" height="37.700" rx="4" fill="none" stroke="#ff2015" stroke-width="4"/>
<path d="M268 792 475 540 468 538 487 532 482 550 480 545 270 793z" fill="#ff2015"/>
<rect x="1476" y="986" width="1" height="1" fill="#444"/>
</svg>
</body></html>
